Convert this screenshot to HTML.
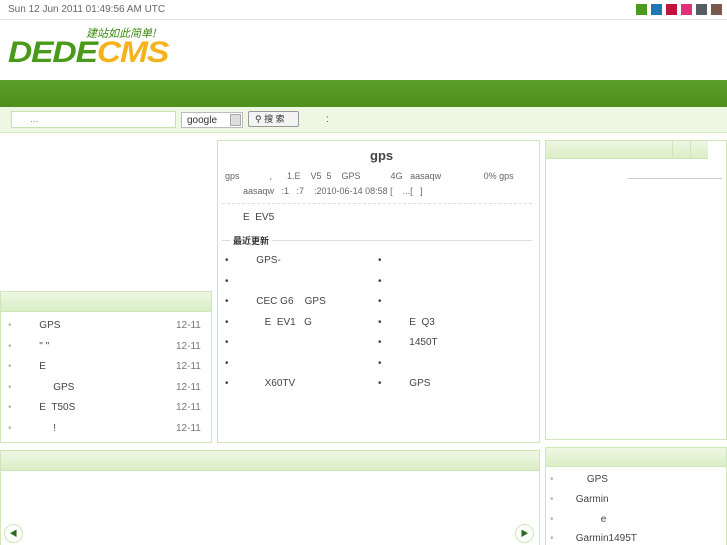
<!DOCTYPE html>
<html><head><meta charset="utf-8"><style>
*{margin:0;padding:0;box-sizing:border-box}
html,body{width:727px;height:545px;overflow:hidden}
body{background:#fff;font-family:"Liberation Sans","Noto Sans CJK SC",sans-serif;font-size:10px;color:#555;position:relative}
.a{position:absolute}
.box{position:absolute;border:1px solid #cfe6b8;background:#fff}
.hd{position:absolute;left:0;right:0;top:0;background:linear-gradient(#eef7e4,#d9eec6);border-bottom:1px solid #cfe6b8}
.sq{position:absolute;top:4px;width:11px;height:11px}
.t{position:absolute;white-space:pre;font-size:10px;color:#444}
</style></head><body>
<div class="t" style="left:8px;top:4px;color:#666">Sun 12 Jun 2011 01:49:56 AM UTC</div>
<div class="sq" style="left:636px;background:#4a9a1e"></div>
<div class="sq" style="left:651px;background:#1f78b4"></div>
<div class="sq" style="left:666px;background:#c0143c"></div>
<div class="sq" style="left:681px;background:#e0307a"></div>
<div class="sq" style="left:696px;background:#555c66"></div>
<div class="sq" style="left:711px;background:#7a5a4a"></div>
<div class="a" style="left:0;top:19px;width:727px;height:1px;background:#e2e2e2"></div>
<div class="a" style="left:86px;top:25px;color:#3a8a10;font-size:11px;font-style:italic;font-family:'Noto Sans CJK SC',sans-serif">建站如此简单!</div>
<div class="a" style="left:8px;top:36px;font:italic bold 30px 'Liberation Sans',sans-serif;letter-spacing:-1px;transform:scaleX(1.12);transform-origin:left"><span style="color:#4a9a1a">DEDE</span><span style="color:#f5b21c">CMS</span></div>
<div class="a" style="left:0;top:80px;width:727px;height:27px;background:linear-gradient(#5b9e28,#4f8f1c)"></div>
<div class="a" style="left:0;top:107px;width:727px;height:26px;background:#eef7e4;border-bottom:1px solid #d2e8bd"></div>
<div class="a" style="left:11px;top:111px;width:165px;height:17px;background:#fff;border:1px solid #c8dfb0;color:#888;padding:2px 18px">...</div>
<div class="a" style="left:181px;top:112px;width:62px;height:16px;background:#fff;border:1px solid #bbb;color:#333;padding:2px 5px">google<span style="position:absolute;right:1px;top:1px;width:11px;height:12px;background:#ddd;border:1px solid #aaa"></span></div>
<div class="a" style="left:248px;top:111px;width:51px;height:16px;background:#f4f4f4;border:1px solid #999;border-radius:2px;color:#333;padding:1px 0 0 6px;font-size:9px;white-space:nowrap;line-height:13px">⚲ 搜 索</div>
<div class="t" style="left:326px;top:114px">:</div>

<div class="box" style="left:217px;top:140px;width:323px;height:303px"></div>
<div class="a" style="left:370px;top:148px;font-size:13px;font-weight:bold;color:#444">gps</div>
<div class="t" style="left:225px;top:171px;color:#666;font-size:9px">gps            ,      1.E    V5  5    GPS            4G   aasaqw                 0% gps</div>
<div class="t" style="left:243px;top:186px;color:#666;font-size:9px">aasaqw   :1   :7    :2010-06-14 08:58 [    ...[   ]</div>
<div class="a" style="left:222px;top:203px;width:310px;border-top:1px dashed #ddd"></div>
<div class="t" style="left:243px;top:212px">E  EV5</div>
<div class="a" style="left:222px;top:240px;width:310px;height:1px;background:#ddd"></div>
<div class="a" style="left:230px;top:234px;background:#fff;padding:0 3px;font-size:9px;font-weight:bold;color:#333">最近更新</div>
<div class="t" style="left:225px;top:251px;line-height:20.5px">•          GPS-
•
•          CEC G6    GPS
•             E  EV1   G
•
•
•             X60TV</div>
<div class="t" style="left:378px;top:251px;line-height:20.5px">•
•
•
•          E  Q3
•          1450T
•
•          GPS</div>

<div class="box" style="left:0;top:291px;width:212px;height:152px"><div class="hd" style="height:20px"></div></div>
<div class="t" style="left:8px;top:316px;line-height:20.6px"><span style="color:#bbb">•</span>          GPS
<span style="color:#bbb">•</span>          " "
<span style="color:#bbb">•</span>          E
<span style="color:#bbb">•</span>               GPS
<span style="color:#bbb">•</span>          E  T50S
<span style="color:#bbb">•</span>               !</div>
<div class="t" style="left:176px;top:316px;line-height:20.6px;color:#777">12-11
12-11
12-11
12-11
12-11
12-11</div>

<div class="box" style="left:545px;top:140px;width:182px;height:300px"><div class="hd" style="height:18px;right:18px"></div>
<div class="a" style="left:126px;top:0;width:1px;height:18px;background:#cfe6b8"></div>
<div class="a" style="left:144px;top:0;width:1px;height:18px;background:#cfe6b8"></div>
<div class="a" style="left:82px;top:37px;width:94px;height:1px;background:#ccc"></div></div>

<div class="box" style="left:0;top:450px;width:540px;height:100px"><div class="hd" style="height:20px"></div></div>
<div class="a" style="left:4px;top:524px;width:19px;height:19px;border-radius:50%;border:1px solid #cfe6b8;color:#2a6a1a;font-size:8px;text-align:center;line-height:17px">◀</div>
<div class="a" style="left:515px;top:524px;width:19px;height:19px;border-radius:50%;border:1px solid #cfe6b8;color:#2a6a1a;font-size:8px;text-align:center;line-height:17px">▶</div>

<div class="box" style="left:545px;top:447px;width:182px;height:110px"><div class="hd" style="height:19px"></div></div>
<div class="t" style="left:550px;top:470px;line-height:19.8px"><span style="color:#bbb">•</span>            GPS
<span style="color:#bbb">•</span>        Garmin
<span style="color:#bbb">•</span>                 e
<span style="color:#bbb">•</span>        Garmin1495T</div>
</body></html>
